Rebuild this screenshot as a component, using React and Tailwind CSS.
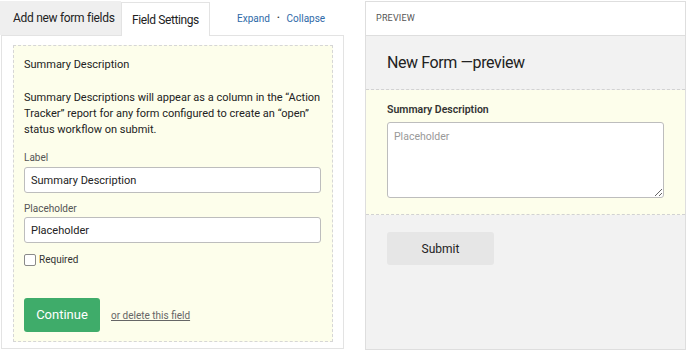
export default function App() {
  return (
    <div
      className="flex w-[688px] h-[351px] bg-white text-[#222] whitespace-nowrap"
      style={{ fontFamily: "Roboto, 'Liberation Sans', sans-serif" }}
    >
      {/* Left column */}
      <div className="flex flex-col w-[344px] h-[349px]">
        <div className="flex items-end h-[35px] shrink-0">
          <div className="w-[121px] h-[34px] bg-[#efefef] flex items-center pl-[13px] text-[12px] tracking-[-0.3px] text-[#222]">
            Add new form fields
          </div>
          <div className="relative -mb-px w-[89px] h-[34px] bg-white border border-b-0 border-[#e3e3e3] flex items-center justify-center text-[12px] tracking-[-0.4px] text-[#222] z-10">
            Field Settings
          </div>
          <div className="flex-1 h-[34px] flex items-center pl-[27px] gap-[7px] text-[10px] text-[#2e6aa8]">
            <span>Expand</span>
            <span className="text-[#333] text-[8px]">•</span>
            <span>Collapse</span>
          </div>
        </div>
        <div className="flex-1 border border-[#e3e3e3] ml-px pt-[9px] pl-[11px] pr-[10px] pb-[6px]">
          <div className="h-full border border-dashed border-[#d6d6d6] bg-[#fdfeeb] pl-[10px] pr-[11px] pt-[11px]">
            <div className="text-[11px] leading-[16px]">Summary Description</div>
            <p className="mt-[17px] text-[11px] leading-[16px] text-[#222] whitespace-normal">
              Summary Descriptions will appear as a column in the “Action Tracker” report for any form configured to create an “open” status workflow on submit.
            </p>
            <div className="mt-[13px] text-[10px] leading-[14px] text-[#555]">Label</div>
            <input
              readOnly
              value="Summary Description"
              className="mt-[2px] block w-[297px] h-[26px] px-[6px] text-[11px] text-[#222] bg-white border border-[#bdbdbd] rounded-[3px] outline-none"
            />
            <div className="mt-[9px] text-[10px] leading-[14px] text-[#555]">Placeholder</div>
            <input
              readOnly
              value="Placeholder"
              className="mt-[1px] block w-[297px] h-[26px] px-[6px] text-[11px] text-[#222] bg-white border border-[#bdbdbd] rounded-[3px] outline-none"
            />
            <div className="mt-[10px] flex items-center gap-[3px]">
              <span className="w-[12px] h-[12px] border border-[#8a8a8a] rounded-[2px] bg-white"></span>
              <span className="text-[10px] leading-[14px] text-[#333]">Required</span>
            </div>
            <div className="mt-[31px] flex items-center gap-[11px]">
              <button className="w-[76px] h-[34px] bg-[#3fac6a] text-white text-[13px] rounded-[3px]">
                Continue
              </button>
              <span className="text-[10px] text-[#666] underline">or delete this field</span>
            </div>
          </div>
        </div>
      </div>

      {/* Right column */}
      <div className="ml-[21px] mt-px w-[321px] h-[349px] border border-[#dedede] bg-[#f2f2f2] flex flex-col">
        <div className="h-[34px] shrink-0 bg-white border-b border-[#dedede] flex items-center pl-[10px] text-[9px] text-[#555] tracking-[0.2px]">
          PREVIEW
        </div>
        <div className="h-[54px] shrink-0 flex items-center pl-[21px] text-[16px] tracking-[-0.4px] text-[#222] border-b border-dashed border-[#d2d2d2]">
          New Form —preview
        </div>
        <div className="h-[125px] shrink-0 bg-[#fdfeeb] border-b border-dashed border-[#d2d2d2] pl-[21px] pt-[13px]">
          <div className="text-[10.5px] font-semibold leading-[14px] text-[#333]">Summary Description</div>
          <textarea
            readOnly
            placeholder="Placeholder"
            className="mt-[5px] block w-[277px] h-[76px] px-[6px] py-[6px] text-[10.5px] bg-white border border-[#bdbdbd] rounded-[3px] outline-none placeholder:text-[#999]"
          />
        </div>
        <div className="pl-[21px] pt-[17px]">
          <button className="w-[107px] h-[33px] bg-[#e6e6e6] rounded-[3px] text-[12px] text-[#222]">
            Submit
          </button>
        </div>
      </div>
    </div>
  );
}
